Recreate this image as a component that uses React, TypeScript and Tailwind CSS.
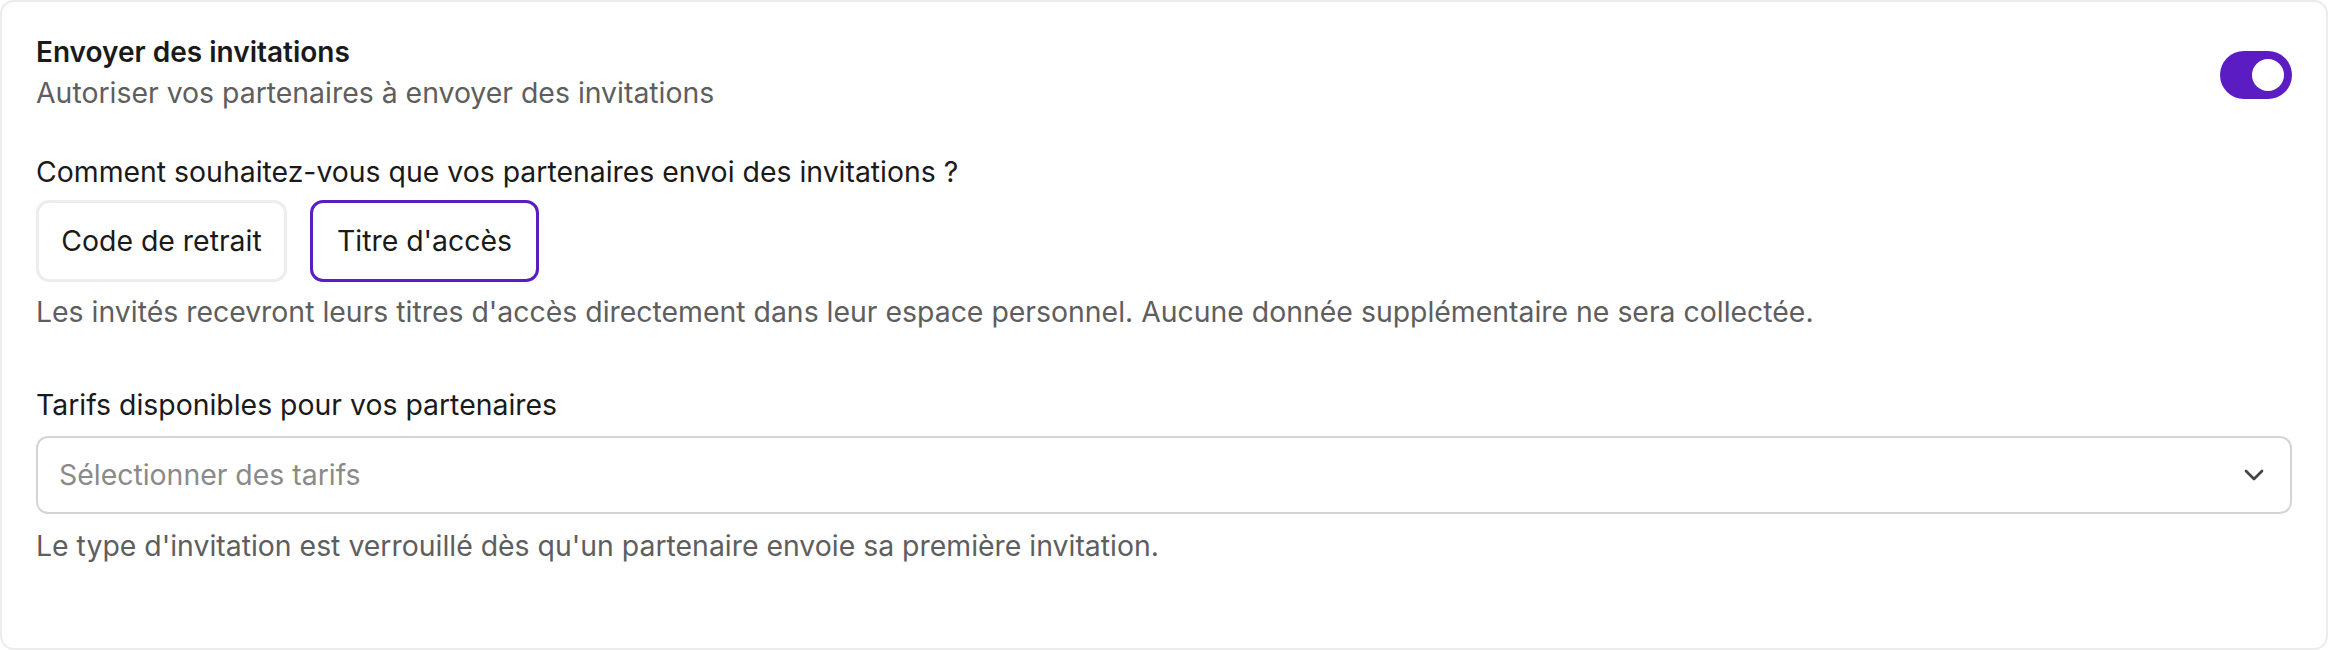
import { ChevronDown } from "lucide-react";

export default function App() {
  return (
    <div className="w-[2328px] h-[650px] bg-white font-['Inter',sans-serif] text-[28.4px] leading-[40px] text-[#1a1a1a]">
      <div className="h-full rounded-[14px] border-2 border-[#ececec] px-[34px] pt-[30px]">
        {/* header */}
        <div className="flex items-start justify-between">
          <div className="flex flex-col gap-[1px]">
            <p className="text-[28px] font-semibold">Envoyer des invitations</p>
            <p className="text-[#5e5e5e]">Autoriser vos partenaires à envoyer des invitations</p>
          </div>
          <button className="mt-[19px] flex h-[48px] w-[72px] items-center justify-end rounded-full bg-[#5b1cc3] px-[8px]">
            <span className="h-[32px] w-[32px] rounded-full bg-white" />
          </button>
        </div>

        <p className="mt-[39px]">Comment souhaitez-vous que vos partenaires envoi des invitations ?</p>
        <div className="mt-[8px] flex gap-[23px]">
          <button className="h-[82px] w-[251px] rounded-[13px] border-[3px] border-[#ededed] bg-white">Code de retrait</button>
          <button className="h-[82px] w-[229px] rounded-[13px] border-[3px] border-[#5b1cc3] bg-white">Titre d'accès</button>
        </div>
        <p className="mt-[10px] text-[#5e5e5e]">
          Les invités recevront leurs titres d'accès directement dans leur espace personnel. Aucune donnée supplémentaire ne sera collectée.
        </p>

        <p className="mt-[53px]">Tarifs disponibles pour vos partenaires</p>
        <div className="mt-[11px] flex h-[78px] items-center justify-between rounded-[12px] border-2 border-[#d4d4d4] pl-[21px] pr-[20px]">
          <span className="text-[#8a8a8a]">Sélectionner des tarifs</span>
          <ChevronDown className="h-[32px] w-[32px] text-[#444]" strokeWidth={2} />
        </div>
        <p className="mt-[12px] text-[#5e5e5e]">
          Le type d'invitation est verrouillé dès qu'un partenaire envoie sa première invitation.
        </p>
      </div>
    </div>
  );
}
